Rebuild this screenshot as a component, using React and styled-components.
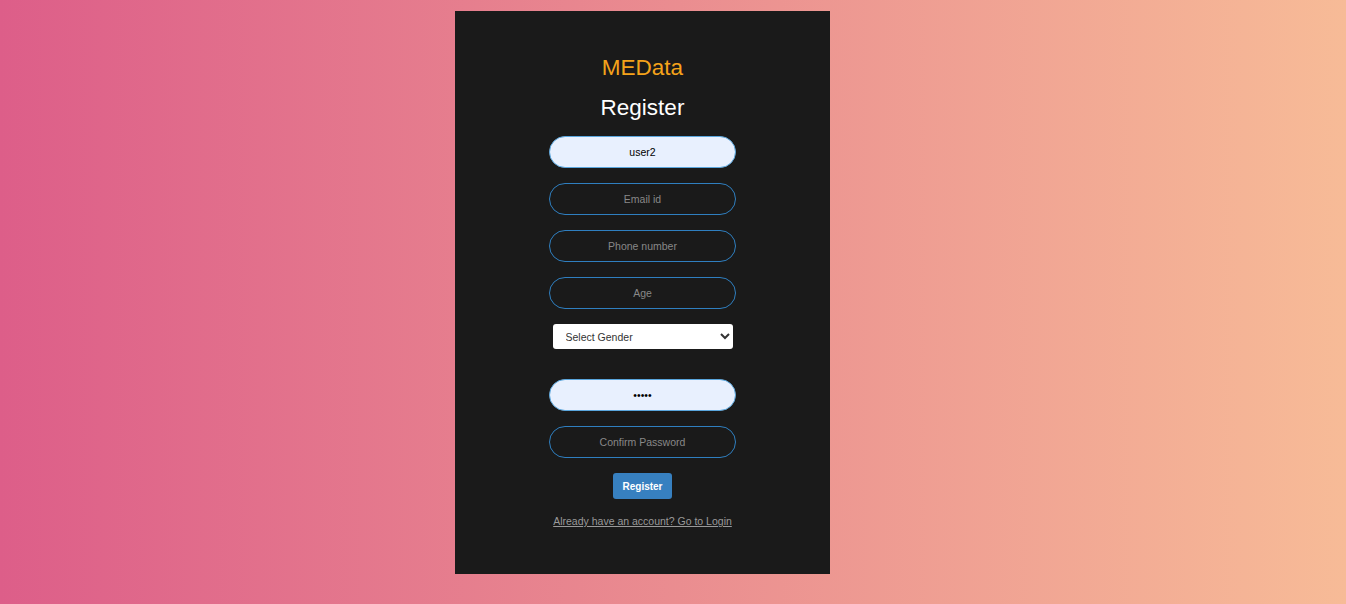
import React from "react";
import styled, { createGlobalStyle } from "styled-components";

const GlobalStyle = createGlobalStyle`
  html, body {
    margin: 0;
    padding: 0;
  }
  body {
    font-family: "Liberation Sans", Arial, sans-serif;
    background: linear-gradient(to right, #dd5e89, #f7bb97);
    min-height: 604px;
  }
`;

const Page = styled.div`
  display: flex;
  align-items: flex-start;
  height: 604px;
  padding: 11px 0 0 455px;
  box-sizing: border-box;
`;

const Card = styled.div`
  width: 375px;
  height: 563px;
  background: #1a1a1a;
  display: flex;
  flex-direction: column;
  align-items: center;
  padding-top: 44px;
  box-sizing: border-box;
`;

const Brand = styled.div`
  font-size: 22.5px;
  line-height: 26px;
  color: #f5a31a;
`;

const Title = styled.h2`
  margin: 14px 0 15px;
  font-size: 22.5px;
  line-height: 26px;
  font-weight: 400;
  color: #ffffff;
`;

const Form = styled.form`
  display: flex;
  flex-direction: column;
  align-items: center;
`;

const Field = styled.input`
  width: 187px;
  height: 32px;
  box-sizing: border-box;
  border-radius: 16px;
  border: 1px solid ${({ $filled }) => ($filled ? "#5aa6dd" : "#2f7fc0")};
  background: ${({ $filled }) => ($filled ? "#e8f0fe" : "transparent")};
  color: #000;
  text-align: center;
  font-family: "Liberation Sans", Arial, sans-serif;
  font-size: 10.5px;
  outline: none;
  margin-bottom: 15px;

  &::placeholder {
    color: #888;
  }
`;

const Select = styled.select`
  width: 180px;
  height: 25px;
  border: none;
  border-radius: 3px;
  background: #fff;
  color: #333;
  font-family: "Liberation Sans", Arial, sans-serif;
  font-size: 10.5px;
  padding: 0 9px;
  margin-bottom: 30px;
  outline: none;
`;

const Button = styled.button`
  width: 59px;
  height: 26px;
  border: none;
  border-radius: 3px;
  background: #3780c0;
  color: #fff;
  font-family: "Liberation Sans", Arial, sans-serif;
  font-size: 10px;
  font-weight: 700;
  padding: 0;
  margin-bottom: 15px;
  cursor: pointer;
`;

const LoginLink = styled.a`
  font-size: 10.5px;
  line-height: 14px;
  color: #999;
  text-decoration: underline;
`;

export default function App() {
  return (
    <>
      <GlobalStyle />
      <Page>
        <Card>
          <Brand>MEData</Brand>
          <Title>Register</Title>
          <Form onSubmit={(e) => e.preventDefault()}>
            <Field $filled type="text" defaultValue="user2" placeholder="Username" />
            <Field type="email" placeholder="Email id" />
            <Field type="text" placeholder="Phone number" />
            <Field type="text" placeholder="Age" />
            <Select defaultValue="">
              <option value="">Select Gender</option>
              <option value="male">Male</option>
              <option value="female">Female</option>
            </Select>
            <Field $filled type="password" defaultValue="abcde" placeholder="Password" />
            <Field type="password" placeholder="Confirm Password" />
            <Button type="submit">Register</Button>
            <LoginLink href="#login">Already have an account? Go to Login</LoginLink>
          </Form>
        </Card>
      </Page>
    </>
  );
}
